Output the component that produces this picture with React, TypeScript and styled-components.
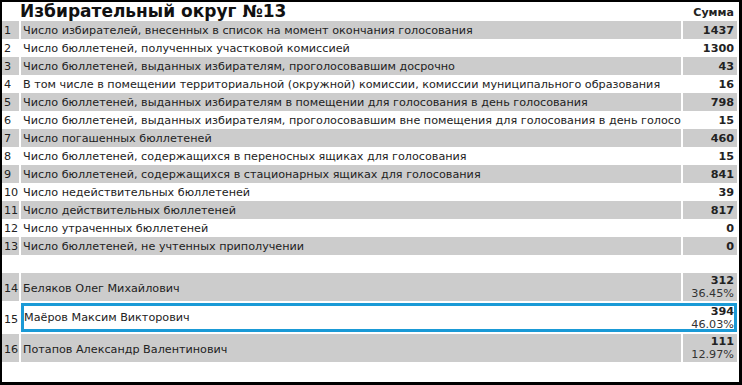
import React from "react";
import styled, { createGlobalStyle } from "styled-components";

const GlobalStyle = createGlobalStyle`
  html, body {
    margin: 0;
    padding: 0;
    background: #ffffff;
  }
  body {
    font-family: Verdana, "DejaVu Sans", sans-serif;
  }
`;

const Frame = styled.div`
  box-sizing: border-box;
  width: 742px;
  height: 385px;
  border: 2px solid #000;
  border-right-width: 3px;
  border-bottom-width: 3px;
  background: #fff;
  overflow: hidden;
  padding-right: 2px;
  display: flex;
  flex-direction: column;
`;

const Head = styled.div`
  display: flex;
  align-items: flex-end;
  height: 19px;
  padding-left: 18px;
`;

const Title = styled.h1`
  flex: 1;
  margin: 0;
  font-size: 17px;
  line-height: 19px;
  font-weight: bold;
  color: #111;
`;

const SumHead = styled.span`
  width: 54px;
  text-align: right;
  padding-right: 3px;
  box-sizing: border-box;
  font-size: 11px;
  font-weight: bold;
  color: #222;
  line-height: 16px;
`;

const Row = styled.div<{ $height: number }>`
  display: flex;
  gap: 2px;
  height: ${(p) => p.$height}px;
  font-size: 11.2px;
  color: #222;
`;

const Num = styled.div<{ $shade: boolean; $low?: boolean }>`
  width: 15px;
  flex-shrink: 0;
  display: flex;
  align-items: center;
  padding-left: 2px;
  padding-top: ${(p) => (p.$low ? "3px" : "0")};
  background: ${(p) => (p.$shade ? "#cccccc" : "#ffffff")};
`;

const Body = styled.div<{ $active?: boolean }>`
  flex: 1;
  min-width: 0;
  display: flex;
  gap: 2px;
  box-sizing: border-box;
  border: ${(p) => (p.$active ? "3px solid #1a9ad6" : "none")};
`;

const Label = styled.div<{ $shade: boolean; $active?: boolean; $low?: boolean }>`
  flex: 1 1 0;
  min-width: 0;
  display: flex;
  align-items: center;
  padding-left: ${(p) => (p.$active ? "0px" : "2px")};
  padding-top: ${(p) => (p.$low ? (p.$active ? "0px" : "3px") : "0")};
  white-space: nowrap;
  overflow: hidden;
  background: ${(p) => (p.$shade ? "#cccccc" : "#ffffff")};
`;

const Value = styled.div<{ $shade: boolean; $active?: boolean }>`
  width: ${(p) => (p.$active ? "51px" : "54px")};
  flex-shrink: 0;
  display: flex;
  flex-direction: column;
  justify-content: center;
  align-items: flex-end;
  padding-right: ${(p) => (p.$active ? "0px" : "3px")};
  box-sizing: border-box;
  background: ${(p) => (p.$shade ? "#cccccc" : "#ffffff")};
`;

const Count = styled.b`
  font-weight: bold;
  line-height: 13px;
`;

const Percent = styled.span`
  line-height: 13px;
  color: #333;
`;

const Spacer = styled.div`
  height: 18px;
`;

const CandidateGap = styled.div`
  height: 2px;
`;

const stats: [string, number][] = [
  ["Число избирателей, внесенных в список на момент окончания голосования", 1437],
  ["Число бюллетеней, полученных участковой комиссией", 1300],
  ["Число бюллетеней, выданных избирателям, проголосовавшим досрочно", 43],
  ["В том числе в помещении территориальной (окружной) комиссии, комиссии муниципального образования", 16],
  ["Число бюллетеней, выданных избирателям в помещении для голосования в день голосования", 798],
  ["Число бюллетеней, выданных избирателям, проголосовавшим вне помещения для голосования в день голосования", 15],
  ["Число погашенных бюллетеней", 460],
  ["Число бюллетеней, содержащихся в переносных ящиках для голосования", 15],
  ["Число бюллетеней, содержащихся в стационарных ящиках для голосования", 841],
  ["Число недействительных бюллетеней", 39],
  ["Число действительных бюллетеней", 817],
  ["Число утраченных бюллетеней", 0],
  ["Число бюллетеней, не учтенных приполучении", 0],
];

const candidates = [
  { name: "Беляков Олег Михайлович", votes: 312, pct: "36.45%" },
  { name: "Маёров Максим Викторович", votes: 394, pct: "46.03%", active: true },
  { name: "Потапов Александр Валентинович", votes: 111, pct: "12.97%" },
];

export default function App() {
  return (
    <Frame>
      <GlobalStyle />
      <Head>
        <Title>Избирательный округ №13</Title>
        <SumHead>Сумма</SumHead>
      </Head>
      {stats.map(([label, value], i) => {
        const shade = i % 2 === 0;
        return (
          <Row key={label} $height={18}>
            <Num $shade={shade}>{i + 1}</Num>
            <Body>
              <Label $shade={shade}>{label}</Label>
              <Value $shade={shade}>
                <Count>{value}</Count>
              </Value>
            </Body>
          </Row>
        );
      })}
      <Spacer />
      {candidates.map((c, i) => {
        const shade = !c.active;
        return (
          <React.Fragment key={c.name}>
            {i > 0 && <CandidateGap />}
            <Row $height={c.active ? 29 : 28}>
              <Num $shade={shade} $low>
                {14 + i}
              </Num>
              <Body $active={c.active}>
                <Label $shade={shade} $active={c.active} $low>
                  {c.name}
                </Label>
                <Value $shade={shade} $active={c.active}>
                  <Count>{c.votes}</Count>
                  <Percent>{c.pct}</Percent>
                </Value>
              </Body>
            </Row>
          </React.Fragment>
        );
      })}
    </Frame>
  );
}
